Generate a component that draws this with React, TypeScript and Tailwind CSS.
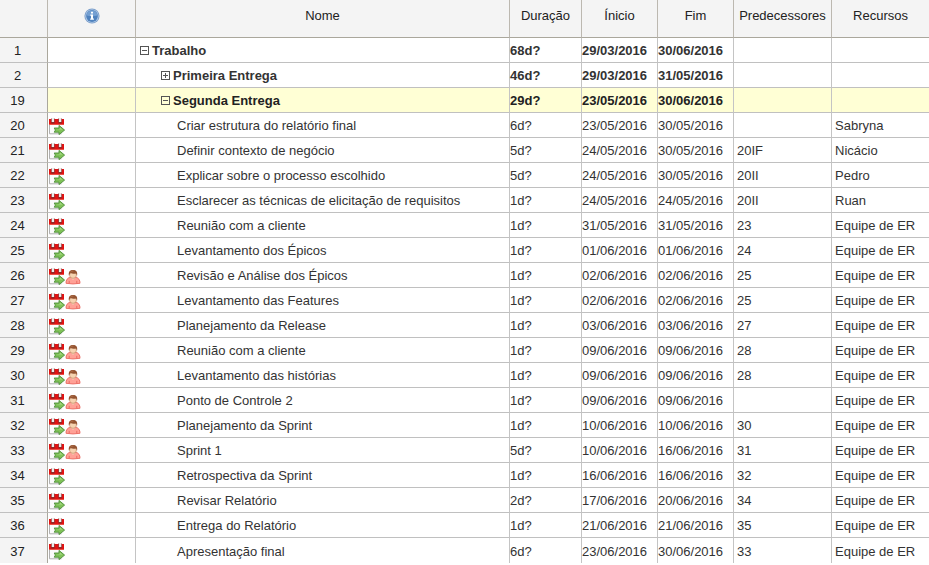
type Task = {
  id: number;
  name: string;
  level: number;
  duration: string;
  start: string;
  end: string;
  pred?: string;
  resource?: string;
  toggle?: 'open' | 'closed';
  selected?: boolean;
  person?: boolean;
};

const er = 'Equipe de ER';

const tasks: Task[] = [
  { id: 1, name: 'Trabalho', level: 0, duration: '68d?', start: '29/03/2016', end: '30/06/2016', toggle: 'open' },
  { id: 2, name: 'Primeira Entrega', level: 1, duration: '46d?', start: '29/03/2016', end: '31/05/2016', toggle: 'closed' },
  { id: 19, name: 'Segunda Entrega', level: 1, duration: '29d?', start: '23/05/2016', end: '30/06/2016', toggle: 'open', selected: true },
  { id: 20, name: 'Criar estrutura do relatório final', level: 2, duration: '6d?', start: '23/05/2016', end: '30/05/2016', resource: 'Sabryna' },
  { id: 21, name: 'Definir contexto de negócio', level: 2, duration: '5d?', start: '24/05/2016', end: '30/05/2016', pred: '20IF', resource: 'Nicácio' },
  { id: 22, name: 'Explicar sobre o processo escolhido', level: 2, duration: '5d?', start: '24/05/2016', end: '30/05/2016', pred: '20II', resource: 'Pedro' },
  { id: 23, name: 'Esclarecer as técnicas de elicitação de requisitos', level: 2, duration: '1d?', start: '24/05/2016', end: '24/05/2016', pred: '20II', resource: 'Ruan' },
  { id: 24, name: 'Reunião com a cliente', level: 2, duration: '1d?', start: '31/05/2016', end: '31/05/2016', pred: '23', resource: er },
  { id: 25, name: 'Levantamento dos Épicos', level: 2, duration: '1d?', start: '01/06/2016', end: '01/06/2016', pred: '24', resource: er },
  { id: 26, name: 'Revisão e Análise dos Épicos', level: 2, duration: '1d?', start: '02/06/2016', end: '02/06/2016', pred: '25', resource: er, person: true },
  { id: 27, name: 'Levantamento das Features', level: 2, duration: '1d?', start: '02/06/2016', end: '02/06/2016', pred: '25', resource: er, person: true },
  { id: 28, name: 'Planejamento da Release', level: 2, duration: '1d?', start: '03/06/2016', end: '03/06/2016', pred: '27', resource: er },
  { id: 29, name: 'Reunião com a cliente', level: 2, duration: '1d?', start: '09/06/2016', end: '09/06/2016', pred: '28', resource: er, person: true },
  { id: 30, name: 'Levantamento das histórias', level: 2, duration: '1d?', start: '09/06/2016', end: '09/06/2016', pred: '28', resource: er, person: true },
  { id: 31, name: 'Ponto de Controle 2', level: 2, duration: '1d?', start: '09/06/2016', end: '09/06/2016', resource: er, person: true },
  { id: 32, name: 'Planejamento da Sprint', level: 2, duration: '1d?', start: '10/06/2016', end: '10/06/2016', pred: '30', resource: er, person: true },
  { id: 33, name: 'Sprint 1', level: 2, duration: '5d?', start: '10/06/2016', end: '16/06/2016', pred: '31', resource: er, person: true },
  { id: 34, name: 'Retrospectiva da Sprint', level: 2, duration: '1d?', start: '16/06/2016', end: '16/06/2016', pred: '32', resource: er },
  { id: 35, name: 'Revisar Relatório', level: 2, duration: '2d?', start: '17/06/2016', end: '20/06/2016', pred: '34', resource: er },
  { id: 36, name: 'Entrega do Relatório', level: 2, duration: '1d?', start: '21/06/2016', end: '21/06/2016', pred: '35', resource: er },
  { id: 37, name: 'Apresentação final', level: 2, duration: '6d?', start: '23/06/2016', end: '30/06/2016', pred: '33', resource: er },
];

function InfoIcon() {
  return (
    <svg width="16" height="16" viewBox="0 0 16 16" role="img" aria-label="Informações" className="mx-auto">
      <circle cx="8" cy="8" r="7.6" fill="#7c9fcb" />
      <circle cx="8" cy="8" r="6.6" fill="#b9d0ea" />
      <circle cx="8" cy="8" r="5.9" fill="#4f82be" />
      <path d="M2.6 7.6a5.4 5.2 0 0 1 10.8 0Q8 9 2.6 7.6Z" fill="#75a0d2" />
      <path d="M7 3.8h2v1.6H7zM6.3 6.5H9v4h.9v1.2H6.2v-1.2H7V7.7h-.7z" fill="#fff" />
    </svg>
  );
}

function CalendarIcon() {
  return (
    <svg width="16" height="17" viewBox="0 0 16 17" aria-hidden="true" className="block">
      <path d="M.5 7h14v8.5H.5z" fill="#fbfbfb" />
      <path d="M.5 7v8.8h12" fill="none" stroke="#b0b0b0" strokeWidth="1" />
      <path d="M0 1h15v6H0z" fill="#e01212" />
      <path d="M0 6h15v1H0z" fill="#ec5148" />
      <path d="M2 .5h3.8v3.7a1.9 1.6 0 0 1-3.8 0zM9.2.5H13v3.7a1.9 1.6 0 0 1-3.8 0z" fill="#8e2a2a" />
      <path d="M2.7 0h2.4v4H2.7zM9.9 0h2.4v4H9.9z" fill="#ececec" />
      <path d="M5.2 10H10V7.4l5.6 4.7-5.6 4.5v-2.4H5.2l1.2-2.1z" fill="#7fc257" stroke="#4c8d38" strokeWidth=".9" strokeLinejoin="round" />
      <path d="M7 11h3.9V9.6l2.5 2.2z" fill="#abdb8b" />
    </svg>
  );
}

function PersonIcon() {
  return (
    <svg width="16" height="17" viewBox="0 0 16 17" aria-hidden="true" className="block">
      <path d="M1 15.3c-.2-3.3 1.6-5.7 4.6-6h4.8c3 .3 4.8 2.7 4.6 6Q8 16.6 1 15.3Z" fill="#ffa196" stroke="#ea6a61" strokeWidth=".9" />
      <path d="M4.2 12.8v2.6M11.8 12.8v2.6" stroke="#e8655c" strokeWidth=".9" />
      <path d="M5.6 9.3h4.8L8 12z" fill="#f6d3b8" />
      <ellipse cx="8" cy="7" rx="3.5" ry="3.3" fill="#f6d3b0" stroke="#b98059" strokeWidth=".6" />
      <path d="M3.9 7.4C3.2 3.8 5 2 8 2s4.8 1.8 4.1 5.4L11 5.4Q8 6.4 5.6 5.1Q5 6 3.9 7.4Z" fill="#945431" />
      <path d="M5.4 4.1Q6.5 2.9 8.5 3" fill="none" stroke="#b97a50" strokeWidth=".8" />
    </svg>
  );
}

function Toggle({ state, label }: { state: 'open' | 'closed'; label: string }) {
  return (
    <button type="button" aria-expanded={state === 'open'} aria-label={label} className="block">
      <svg width="10" height="11" viewBox="0 0 10 11" aria-hidden="true" shapeRendering="crispEdges">
        <path d="M.5.5h8v8h-8zM2 4.5h5" fill="none" stroke="#555" />
        {state === 'closed' && <path d="M4.5 2v5" stroke="#555" />}
      </svg>
    </button>
  );
}

const indents = ['pl-1', 'pl-[25px]', 'pl-[41px]'];
const headCell = 'h-[38px] border-b border-b-[#aaa79c] border-r border-r-[#bcb8b0] pb-1.5 font-normal text-[#222]';
const cell = 'border-r border-r-[#c4c4c4]';

export default function App() {
  return (
    <main className="min-h-screen overflow-hidden bg-white font-['Liberation_Sans',Arial,sans-serif] text-[13px] leading-4 text-[#333]">
      <table className="w-full table-fixed border-separate border-spacing-0 whitespace-nowrap">
        <colgroup>
          <col className="w-12" />
          <col className="w-[88px]" />
          <col />
          <col className="w-[72px]" />
          <col className="w-[76px]" />
          <col className="w-[76px]" />
          <col className="w-[98px]" />
          <col className="w-[97px]" />
        </colgroup>
        <thead className="bg-[#f4f4f4]">
          <tr>
            <th className={headCell} aria-label="Número" />
            <th className={headCell}><InfoIcon /></th>
            <th className={headCell}>Nome</th>
            <th className={headCell}>Duração</th>
            <th className={headCell}>Ínicio</th>
            <th className={headCell}>Fim</th>
            <th className={headCell}>Predecessores</th>
            <th className="border-b border-b-[#aaa79c] pb-1.5 font-normal text-[#222]">Recursos</th>
          </tr>
        </thead>
        <tbody className="[&>tr:last-child>*]:border-b-0">
          {tasks.map((t) => (
            <tr
              key={t.id}
              className={`h-[25px] *:border-b *:border-b-[#c0c0c0] *:pt-0.5 ${
                t.selected ? 'bg-[#ffffd5] text-[#222]' : ''
              } ${t.toggle ? 'font-bold' : ''}`}
            >
              <th scope="row" className="border-r border-r-[#aaa79c] bg-[#f4f4f4] pr-3 text-center font-normal text-[#222]">
                {t.id}
              </th>
              <td className={cell}>
                {!t.toggle && (
                  <div className="flex items-center pl-px">
                    <CalendarIcon />
                    {t.person && <PersonIcon />}
                  </div>
                )}
              </td>
              <td className={cell}>
                <div className={`flex items-center gap-0.5 ${indents[t.level]}`}>
                  {t.toggle && <Toggle state={t.toggle} label={t.name} />}
                  <span>{t.name}</span>
                </div>
              </td>
              <td className={cell}>{t.duration}</td>
              <td className={cell}>{t.start}</td>
              <td className={cell}>{t.end}</td>
              <td className={`${cell} pl-[3px]`}>{t.pred}</td>
              <td className="pl-[3px]">{t.resource}</td>
            </tr>
          ))}
        </tbody>
      </table>
    </main>
  );
}
